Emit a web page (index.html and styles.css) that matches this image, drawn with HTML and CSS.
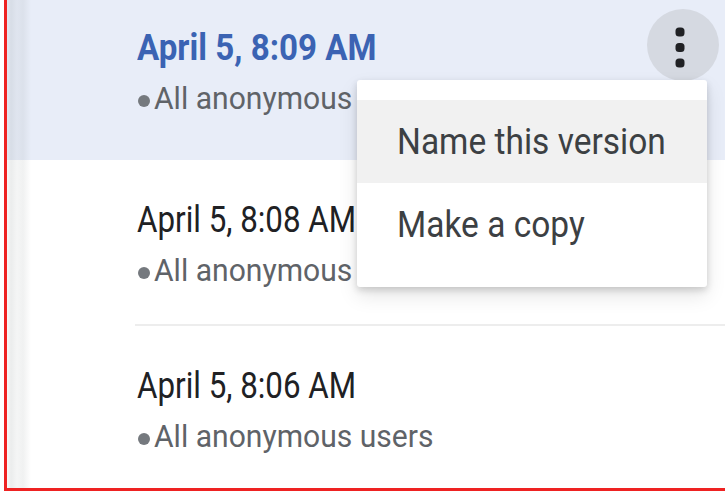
FILE: index.html
```html
<!DOCTYPE html>
<html lang="en">
<head>
<meta charset="utf-8">
<title>Version history</title>
<link rel="stylesheet" href="styles.css">
</head>
<body>
<div class="frame">
  <div class="list">
    <div class="row row-active">
      <div class="row-body">
        <div class="title"><span class="sq">April 5, 8:09 AM</span></div>
        <div class="sub"><span class="dot"></span><span class="sq2">All anonymous users</span></div>
      </div>
    </div>
    <div class="row">
      <div class="row-body divided">
        <div class="title"><span class="sq">April 5, 8:08 AM</span></div>
        <div class="sub"><span class="dot"></span><span class="sq2">All anonymous users</span></div>
      </div>
    </div>
    <div class="row">
      <div class="row-body">
        <div class="title"><span class="sq">April 5, 8:06 AM</span></div>
        <div class="sub"><span class="dot"></span><span class="sq2">All anonymous users</span></div>
      </div>
    </div>
  </div>

  <button class="more" aria-label="More actions">
    <svg width="10" height="42" viewBox="0 0 10 42">
      <rect x="0.5" y="0.5" width="9" height="9" rx="3.5" fill="#202124"/>
      <rect x="0.5" y="16" width="9" height="9" rx="3.5" fill="#202124"/>
      <rect x="0.5" y="31.5" width="9" height="9" rx="3.5" fill="#202124"/>
    </svg>
  </button>

  <div class="menu">
    <div class="menu-item hover"><span class="sq3">Name this version</span></div>
    <div class="menu-item"><span class="sq3">Make a copy</span></div>
  </div>
</div>
</body>
</html>
```

FILE: styles.css
```css
html, body {
  margin: 0;
  padding: 0;
  background: #ffffff;
}

body {
  font-family: Roboto, "Noto Sans", Arial, sans-serif;
  overflow: hidden;
}

.frame {
  position: relative;
  margin-left: 4px;
  height: 488px;
  border-left: 3px solid #ee2222;
  border-bottom: 3px solid #ee2222;
  overflow: hidden;
}

.frame::before {
  content: "";
  position: absolute;
  left: 0;
  top: 0;
  bottom: 0;
  width: 24px;
  z-index: 1;
  pointer-events: none;
  background: linear-gradient(to right,
    rgba(120,130,130,0.05) 0px,
    rgba(120,130,130,0.15) 4px,
    rgba(120,130,130,0.08) 10px,
    rgba(120,130,130,0.11) 16px,
    rgba(120,130,130,0) 24px);
}

.list {
  display: flex;
  flex-direction: column;
}

.row {
  height: 166px;
}

.row-active {
  background: #e8edf8;
  margin-top: -10px;
  height: 170px;
}

.row-body {
  margin-left: 128px;
  padding-left: 2px;
  padding-top: 40px;
  height: 100%;
  box-sizing: border-box;
}

.row-active .row-body {
  padding-top: 38px;
}

.divided {
  border-bottom: 2px solid #ededed;
}

.title {
  font-size: 36px;
  line-height: 40px;
  color: #202124;
  white-space: nowrap;
}

.row-active .title {
  color: #3b63b3;
  font-weight: 700;
}

.sq {
  display: inline-block;
  transform: scaleX(0.87);
  transform-origin: left center;
}

.row-active .sq {
  transform: scaleX(0.92);
}

.sub {
  margin-top: 13px;
  font-size: 31px;
  line-height: 36px;
  color: #5f6368;
  white-space: nowrap;
  display: flex;
  align-items: center;
}

.sq2 {
  display: inline-block;
  transform: scaleX(0.97);
  transform-origin: left center;
}

.dot {
  width: 12px;
  height: 12px;
  border-radius: 50%;
  background: #75797e;
  margin-left: 1px;
  margin-right: 4px;
  margin-top: 3px;
  flex: none;
}

.more {
  position: absolute;
  left: 640px;
  top: 9px;
  width: 72px;
  height: 72px;
  border-radius: 50%;
  border: none;
  padding: 0;
  background: #d5d9e1;
  display: flex;
  align-items: center;
  justify-content: center;
}

.more svg {
  margin-top: 6px;
  margin-left: -6px;
}

.menu {
  position: absolute;
  z-index: 2;
  left: 350px;
  top: 80px;
  width: 350px;
  padding: 20px 0 21px;
  background: #ffffff;
  border-radius: 3px;
  box-shadow: 0 3px 7px rgba(0,0,0,0.16), 0 9px 20px rgba(0,0,0,0.10);
}

.menu-item {
  height: 83px;
  box-sizing: border-box;
  padding: 2px 0 0 40px;
  line-height: 81px;
  font-size: 36px;
  color: #3c4043;
  white-space: nowrap;
}

.menu-item.hover {
  background: #f1f1f1;
}

.sq3 {
  display: inline-block;
  transform: scaleX(0.93);
  transform-origin: left center;
}
```
